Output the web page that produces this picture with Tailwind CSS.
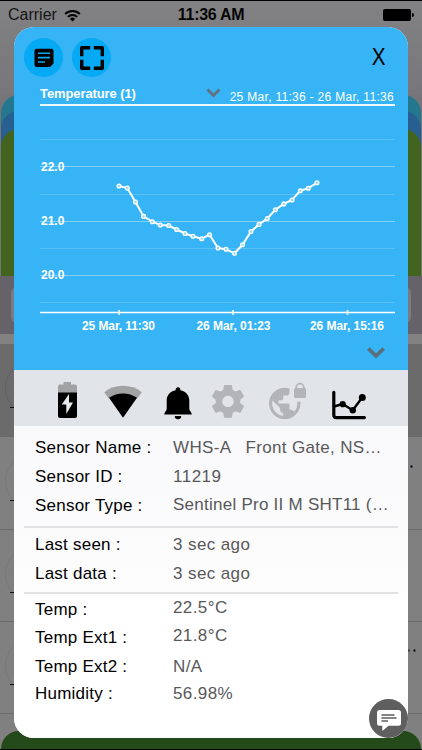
<!DOCTYPE html>
<html lang="en">
<head>
    <meta charset="UTF-8">
    <meta name="viewport" content="width=device-width, initial-scale=1.0">
    <title>Sensor details</title>
    <script src="https://cdn.jsdelivr.net/npm/@tailwindcss/browser@4"></script>
</head>
<body class="relative w-[422px] h-[750px] overflow-hidden bg-[#808080] font-['Liberation_Sans',Arial,sans-serif] text-black">

    <!-- Dimmed page behind the dialog -->
    <div class="absolute inset-0 flex flex-col border-y border-black overflow-hidden">
        <div class="h-[94px] shrink-0 bg-linear-to-b from-[#828284] to-[#77777b]"></div>
        <div class="h-[181px] shrink-0 px-px bg-[#757579]">
            <div class="h-full rounded-t-[18px] bg-[#25768f] pt-4">
                <div class="h-full rounded-t-[18px] bg-[#285f91] pt-[18px]">
                    <div class="h-full rounded-t-[18px] bg-[#42641f]"></div>
                </div>
            </div>
        </div>
        <div class="h-[58px] shrink-0 bg-[#656369] px-[11px] pt-[11px]">
            <div class="h-9 rounded-md bg-[#7b7b7f]"></div>
        </div>
        <div class="h-[10px] shrink-0 bg-[#828282]"></div>
        <div class="h-[93px] shrink-0 bg-[#6b6b6b] flex justify-between pl-[5px]">
            <div class="mt-4 size-14 rounded-full border border-[#606060]"></div>
        </div>
        <div class="h-[93px] shrink-0 border-b border-[#6b6b6b] pl-[5px]">
            <div class="mt-4 size-14 rounded-full border border-[#787878]"></div>
        </div>
        <div class="h-[92px] shrink-0 border-b border-[#6b6b6b] pl-[5px]">
            <div class="mt-4 size-14 rounded-full border border-[#787878]"></div>
        </div>
        <div class="h-[92px] shrink-0 border-b border-[#6b6b6b] pl-[5px]">
            <div class="mt-4 size-14 rounded-full border border-[#787878]"></div>
        </div>
        <div class="mt-[17px] mx-px grow rounded-t-[18px] bg-[#234a18]"></div>
    </div>
    <svg class="absolute inset-0" width="422" height="750">
        <path d="M10 407.500h4M10 500.500h4M10 592.500h4M10 684.500h4" stroke="#111" stroke-width="1.200"/>
        <path d="M410.500 466.500h2M413.500 650.500h2M408.500 650.500h1" stroke="#000" stroke-width="2"/>
    </svg>

    <!-- Status bar -->
    <div class="relative h-[27px] pt-[3px] flex items-center justify-between pl-2 pr-2">
        <div class="w-[160px] flex items-center gap-[7px]">
            <span class="text-[16px] text-[#151515]">Carrier</span>
            <svg width="17" height="13" viewBox="0 0 17 13" fill="none" stroke="#000" stroke-width="2">
                <path d="M1.200 5a10.300 10.300 0 0 1 14.600 0M3.900 7.900a6.500 6.500 0 0 1 9.200 0"/>
                <path d="M8.500 12.500 5.900 9.900a3.700 3.700 0 0 1 5.200 0z" fill="#000" stroke="none"/>
            </svg>
        </div>
        <span class="text-[16px] font-bold tracking-[-0.3px] text-[#050505] whitespace-nowrap">11:36 AM</span>
        <div class="w-[160px] flex items-center justify-end">
            <div class="w-7 h-3 rounded-xs bg-black"></div>
            <div class="ml-px w-[2px] h-1 rounded-r-full bg-black"></div>
        </div>
    </div>

    <!-- Dialog -->
    <div class="relative ml-[14px] w-[394px] h-[711px] rounded-[20px] overflow-hidden bg-white flex flex-col">
        <div class="h-[343px] shrink-0 bg-[#36b4f5]">
            <div class="h-[57px] pt-[11px] pl-[10px] pr-[22px] flex items-start">
                <div class="size-[39px] rounded-full bg-[#06a9f3] flex items-center justify-center">
                    <svg width="20" height="20" viewBox="0 0 20 20">
                        <path d="M2.500.8h15a2 2 0 0 1 2 2V15.500l-3.500 3.500H2.500a2 2 0 0 1-2-2V2.800a2 2 0 0 1 2-2z"/>
                        <path d="M4 5.200h12M4 9.600h12M4 14h7" stroke="#06a9f3" stroke-width="1.600"/>
                    </svg>
                </div>
                <div class="ml-[9px] size-[39px] rounded-full bg-[#06a9f3] flex items-center justify-center">
                    <svg width="26" height="26" viewBox="0 0 26 26" fill="none" stroke="#000" stroke-width="3.400" stroke-linejoin="round">
                        <path d="M11.200 2.700H2.700v8.500M14.800 2.700h8.500v8.500M11.200 23.300H2.700v-8.500M14.800 23.300h8.500v-8.500"/>
                    </svg>
                </div>
                <span class="ml-auto mt-[5px] text-[23px] leading-7 scale-x-90">X</span>
            </div>
            <div class="ml-[26px] w-[355px] h-[22px] border-b-2 border-white/90 flex text-white">
                <span class="text-[13px] leading-[19px] font-bold tracking-[-0.1px]">Temperature (1)</span>
                <svg class="ml-auto mt-1" width="15" height="10" viewBox="0 0 15 10" fill="none" stroke="#5f7480" stroke-width="3">
                    <path d="M1.500 1.500 7.500 7.500l6-6"/>
                </svg>
                <span class="ml-[9px] mr-px pt-[4px] text-[12px] leading-[18px] tracking-[0.300px] whitespace-nowrap">25 Mar, 11:36 - 26 Mar, 11:36</span>
            </div>
            <svg width="394" height="230" viewBox="14 106 394 230">
                <g stroke="#fff">
                    <path d="M40 139.500h355M40 194.500h355M40 248.500h355M40 302.500h355" stroke-opacity=".18"/>
                    <path d="M40 166.500h355M40 221.500h355M40 275.500h355" stroke-opacity=".38"/>
                    <path d="M40 312.500h355" stroke-width="1.500"/>
                    <path d="M119.200 310v5M233 310v5M347.500 310v5" stroke-width="1.500"/>
                </g>
                <g fill="#fff" font-size="12" font-weight="bold" class="font-['Liberation_Sans',Arial,sans-serif]">
                    <text x="41" y="170.500">22.0</text>
                    <text x="41" y="225">21.0</text>
                    <text x="41" y="279">20.0</text>
                    <g text-anchor="middle">
                        <text x="118.500" y="330" textLength="73">25 Mar, 11:30</text>
                        <text x="233.500" y="330" textLength="74">26 Mar, 01:23</text>
                        <text x="347" y="330" textLength="74">26 Mar, 15:16</text>
                    </g>
                </g>
                <polyline id="line" fill="none" stroke="#fff" stroke-width="2"/>
                <g id="dots" fill="#9bd9fa" stroke="#fff" stroke-width="1.300"></g>
            </svg>
            <div class="flex justify-end pr-[23px] pt-[11px]">
                <svg width="18" height="12" viewBox="0 0 18 12" fill="none" stroke="#5b6d78" stroke-width="3.600">
                    <path d="M1.300 1.500 9 9l7.700-7.500"/>
                </svg>
            </div>
        </div>

        <!-- Status icons -->
        <div class="h-14 shrink-0 bg-[#e1e4e9]">
            <svg width="394" height="56" viewBox="14 370 394 56">
                <!-- battery -->
                <path d="M58 393v-6.500a2 2 0 0 1 2-2h3.500V382h7.500v2.500h4a2 2 0 0 1 2 2v6.500z" fill="#a1a2a4"/>
                <path d="M58 392.500h19V416a2 2 0 0 1-2 2H60a2 2 0 0 1-2-2z"/>
                <path d="M69 394v8.500h4l-6.700 11.500v-9.500h-4.500z" fill="#e7e9ed"/>
                <!-- wifi -->
                <path d="M104.200 392.200a31 31 0 0 1 37.600 0l-4.800 6.500h-28z" fill="#a1a2a4"/>
                <path d="M109 397.700a25 25 0 0 1 28 0L123 417.800z"/>
                <!-- bell -->
                <path d="M178 387.300a2.400 2.400 0 0 1 2.300 3c5.500 1.200 9 4.800 9 10.200v8.500c0 1.500 2.500 3.500 2.500 5.500h-27.600c0-2 2.500-4 2.500-5.500v-8.500c0-5.400 3.500-9 9-10.200a2.400 2.400 0 0 1 2.300-3zM174.800 416h6.400a3.200 3.200 0 0 1-6.400 0z"/>
                <!-- gear -->
                <g transform="translate(208.300 381.700) scale(1.640)">
                    <path fill="#b3b4b7" d="M19.430 12.980c.04-.32.07-.64.07-.98s-.03-.66-.07-.98l2.110-1.650c.19-.15.24-.42.12-.64l-2-3.460c-.12-.22-.39-.3-.61-.22l-2.490 1c-.52-.4-1.080-.73-1.690-.98l-.38-2.650C14.460 2.180 14.250 2 14 2h-4c-.25 0-.46.18-.49.42l-.38 2.650c-.61.25-1.170.59-1.690.98l-2.490-1c-.23-.09-.49 0-.61.22l-2 3.460c-.13.22-.07.49.12.64l2.110 1.650c-.04.32-.07.65-.07.98s.03.66.07.98l-2.110 1.650c-.19.15-.24.42-.12.64l2 3.460c.12.22.39.3.61.22l2.490-1c.52.4 1.080.73 1.690.98l.38 2.650c.03.24.24.42.49.42h4c.25 0 .46-.18.49-.42l.38-2.650c.61-.25 1.170-.59 1.690-.98l2.490 1c.23.09.49 0 .61-.22l2-3.460c.12-.22.07-.49-.12-.64l-2.110-1.650zM12 15.500c-1.930 0-3.500-1.570-3.500-3.500s1.570-3.500 3.500-3.500 3.500 1.570 3.500 3.500-1.570 3.500-3.500 3.500z"/>
                </g>
                <!-- globe with lock -->
                <g transform="translate(267.500 383) scale(1.570)" fill="#b3b4b7">
                    <path d="M18.920 12c.04.33.08.66.08 1 0 2.080-.8 3.970-2.100 5.390-.26-.81-1-1.390-1.900-1.390h-1v-3c0-.55-.45-1-1-1H7v-2h2c.55 0 1-.45 1-1V8h2c1.100 0 2-.9 2-2V3.460c-.95-.3-1.950-.46-3-.46C5.480 3 1 7.480 1 13s4.480 10 10 10 10-4.480 10-10c0-.34-.02-.67-.05-1h-2.030zM10 20.930c-3.950-.49-7-3.850-7-7.930 0-.62.080-1.210.21-1.790L8 16v1c0 1.100.9 2 2 2v1.930z"/>
                </g>
                <rect x="294" y="388" width="12" height="10" rx="1.500" fill="#b3b4b7"/>
                <path d="M296.200 389v-1.500a3.800 3.800 0 0 1 7.600 0v1.500" fill="none" stroke="#b3b4b7" stroke-width="1.700"/>
                <!-- chart -->
                <g fill="none" stroke="#000" stroke-linecap="round" stroke-linejoin="round">
                    <path d="M333.800 392.300V415q0 2.600 2.600 2.600h28" stroke-width="3.200"/>
                    <path d="M334 406.500l8.700-2.500 10 6.300 9.700-13" stroke-width="2.400"/>
                </g>
                <circle cx="342.700" cy="404.200" r="3.100"/><circle cx="352.800" cy="410.300" r="3.200"/><circle cx="362.300" cy="397.400" r="3.500"/>
            </svg>
        </div>

        <!-- Sensor details -->
        <div class="grow bg-linear-to-b from-[#f9f9fb] via-[#fcfcfd] via-45% to-white to-60% pt-[7px] pl-[10px] pr-[10px] text-[17px] tracking-[0.23px] whitespace-nowrap">
            <div class="pl-[11px] border-b-2 border-[#e2e2e5] h-[95px]">
                <div class="h-[29px] flex items-center"><span class="w-[138px]">Sensor Name :</span><span class="text-[#58585a] tracking-[0.33px] whitespace-pre">WHS-A   Front Gate, NS…</span></div>
                <div class="h-[29px] flex items-center"><span class="w-[138px]">Sensor ID :</span><span class="text-[#58585a] tracking-[0.5px]">11219</span></div>
                <div class="h-[29px] flex items-center"><span class="w-[138px]">Sensor Type :</span><span class="text-[#58585a] tracking-[0.25px] pb-px">Sentinel Pro II M SHT11 (…</span></div>
            </div>
            <div class="pl-[11px] pt-[2px] border-b-2 border-[#e2e2e5] h-[66px]">
                <div class="h-[29px] flex items-center"><span class="w-[138px]">Last seen :</span><span class="text-[#58585a] tracking-[0.4px]">3 sec ago</span></div>
                <div class="h-[29px] flex items-center"><span class="w-[138px]">Last data :</span><span class="text-[#58585a] tracking-[0.4px]">3 sec ago</span></div>
            </div>
            <div class="pl-[11px] pt-px">
                <div class="h-[29px] flex items-center"><span class="w-[138px]">Temp :</span><span class="text-[#58585a] tracking-[0.4px] pb-1">22.5°C</span></div>
                <div class="h-[27px] flex items-center"><span class="w-[138px]">Temp Ext1 :</span><span class="text-[#58585a] tracking-[0.4px] pb-1">21.8°C</span></div>
                <div class="h-8 flex items-center"><span class="w-[138px]">Temp Ext2 :</span><span class="text-[#58585a] tracking-[0.4px]">N/A</span></div>
                <div class="h-[21px] flex items-center"><span class="w-[138px]">Humidity :</span><span class="text-[#58585a] tracking-[0.4px]">56.98%</span></div>
            </div>
        </div>
    </div>

    <!-- Chat button -->
    <div class="absolute left-[369px] top-[699px] size-[39px] rounded-full bg-[#5f5f60] flex items-center justify-center">
        <svg class="mt-[3px]" width="24" height="21" viewBox="0 0 24 21">
            <path d="M2.500 0h19A2.500 2.500 0 0 1 24 2.500v10.700a2.500 2.500 0 0 1-2.500 2.500H11.500L5.300 21v-5.300H2.500A2.500 2.500 0 0 1 0 13.200V2.500A2.500 2.500 0 0 1 2.500 0z" fill="#fff"/>
            <path d="M4.500 5h13M4.500 8h15M4.500 11h6.500" stroke="#5f5f60" stroke-width="1.400"/>
        </svg>
    </div>

    <script>
        const points = [
            [119, 186], [127.3, 188], [135.5, 202], [143.6, 216.4], [152.3, 221.7], [160.3, 225],
            [168.7, 225.5], [176.7, 229.5], [185, 233.5], [193, 236.3], [201.7, 238.7], [209.5, 234.7],
            [218, 248], [226, 249.3], [234.5, 253.3], [242.5, 244.8], [251, 231.5], [259, 224.4],
            [267.3, 218.5], [275.4, 209.7], [283.8, 203.9], [292, 200], [300.3, 190.7], [308.3, 188.2], [317, 182.8]
        ];
        document.getElementById("line").setAttribute("points", points.join(" "));
        document.getElementById("dots").innerHTML = points.map(p => `<circle cx="${p[0]}" cy="${p[1]}" r="1.9"/>`).join("");
    </script>
</body>
</html>
